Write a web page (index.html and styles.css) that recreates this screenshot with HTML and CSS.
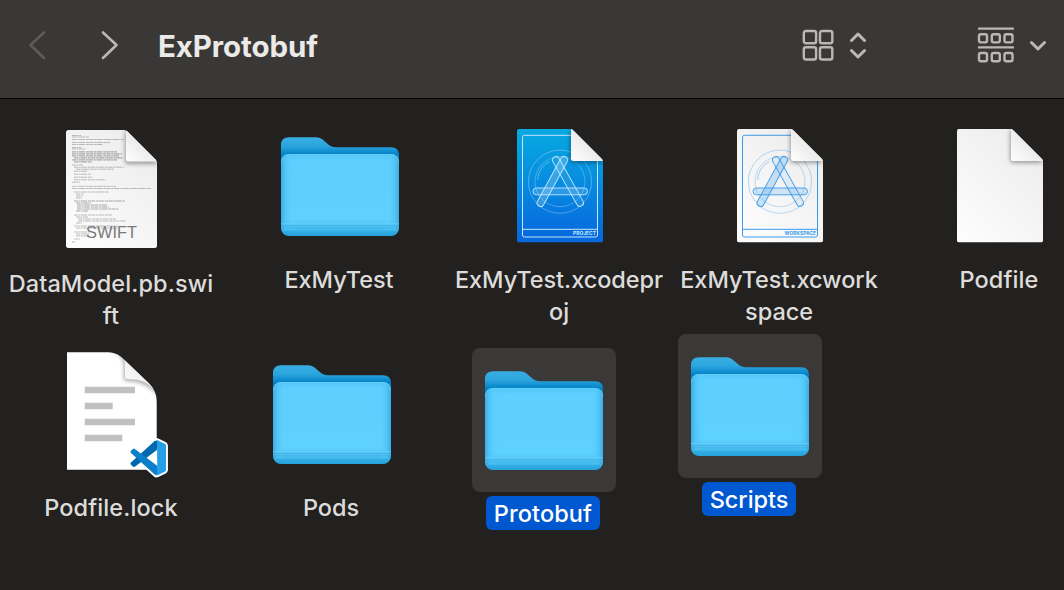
FILE: index.html
```html
<!doctype html>
<html lang="en">
  <head>
    <meta charset="UTF-8" />
    <meta name="viewport" content="width=device-width, initial-scale=1.0" />
    <title>ExProtobuf</title>
    <link rel="stylesheet" href="styles.css">
  </head>
  <body>
    <!-- Shared icon artwork -->
    <svg class="sprite" width="0" height="0" aria-hidden="true">
      <defs>
        <linearGradient id="folderBack" x1="0" y1="23" x2="0" y2="41" gradientUnits="userSpaceOnUse">
          <stop offset="0" stop-color="#3aaee3" />
          <stop offset="0.5" stop-color="#2ba5de" />
          <stop offset="1" stop-color="#0080c5" />
        </linearGradient>
        <linearGradient id="folderEdge" x1="0" y1="0" x2="1" y2="0">
          <stop offset="0" stop-color="#2ba3dc" stop-opacity="0.8" />
          <stop offset="0.035" stop-color="#48bdf2" stop-opacity="0.6" />
          <stop offset="0.11" stop-color="#5fd0ff" stop-opacity="0" />
          <stop offset="0.89" stop-color="#5fd0ff" stop-opacity="0" />
          <stop offset="0.965" stop-color="#48bdf2" stop-opacity="0.6" />
          <stop offset="1" stop-color="#2ba3dc" stop-opacity="0.8" />
        </linearGradient>
        <linearGradient id="folderFront" x1="0" y1="40" x2="0" y2="122" gradientUnits="userSpaceOnUse">
          <stop offset="0" stop-color="#52c6f8" />
          <stop offset="0.08" stop-color="#5ecfff" />
          <stop offset="0.8" stop-color="#5fd1ff" />
          <stop offset="0.87" stop-color="#51c4f6" />
          <stop offset="0.93" stop-color="#43b9ed" />
          <stop offset="0.95" stop-color="#2eaae2" />
          <stop offset="1" stop-color="#28a2da" />
        </linearGradient>
        <linearGradient id="paper" x1="0.1" y1="1" x2="0.8" y2="0">
          <stop offset="0" stop-color="#fdfdfd" />
          <stop offset="1" stop-color="#ececec" />
        </linearGradient>
        <linearGradient id="blueprint" x1="0" y1="0" x2="0" y2="1">
          <stop offset="0" stop-color="#08a9e0" />
          <stop offset="0.5" stop-color="#078ae0" />
          <stop offset="1" stop-color="#0566dd" />
        </linearGradient>
        <linearGradient id="flap" x1="0" y1="1" x2="0.6" y2="0.4">
          <stop offset="0" stop-color="#ffffff" />
          <stop offset="1" stop-color="#e6e6e6" />
        </linearGradient>
        <linearGradient id="lockFlap" x1="0" y1="1" x2="0.6" y2="0.4">
          <stop offset="0" stop-color="#ffffff" />
          <stop offset="1" stop-color="#eeeeee" />
        </linearGradient>
        <filter id="soft" x="-30%" y="-30%" width="160%" height="160%">
          <feGaussianBlur stdDeviation="2.2" />
        </filter>
        <clipPath id="pageClip">
          <path d="M31 15h51.500q1.500 0 2.500 1l29 29q1 1 1 2.500v79q0 2-2 2H31q-2 0-2-2V17q0-2 2-2z" />
        </clipPath>
        <clipPath id="swiftClip">
          <path d="M28.500 12H84q2 0 3.500 1.500l28 28q1.500 1.500 1.500 3.500v82.500q0 2.500-2.500 2.500h-86q-2.500 0-2.500-2.500v-113q0-2.500 2.500-2.500z" />
        </clipPath>
        <clipPath id="lockClip">
          <path d="M27 10.300H68C76 10.300 80.500 14 84.500 18L107 39.500C113.500 45.500 116.700 51 116.700 60V127.700H27z" />
        </clipPath>
        <clipPath id="frontClip">
          <rect x="13" y="40" width="118" height="82" rx="8" />
        </clipPath>
      </defs>

      <symbol id="folder" viewBox="0 0 144 144">
        <path d="M13 31q0-7.700 8-7.700h26.500c4 0 6 1.200 8.500 3.400l3.500 3.100c2.500 2.200 4.500 3.400 8.500 3.400H123q8 0 8 8V70H13z" fill="url(#folderBack)" />
        <rect x="13" y="40" width="118" height="82" rx="8" fill="url(#folderFront)" />
        <g clip-path="url(#frontClip)">
          <rect x="13" y="40" width="118" height="76" fill="url(#folderEdge)" />
          <path d="M13 109.800h118" stroke="#67cdf7" stroke-width="1" />
          <path d="M13 111.500h118M13 113.700h118" stroke="#3eb1e4" stroke-width="1" opacity="0.700" />
        </g>
        <path d="M13.500 49q0-8.500 8-8.500h101q8 0 8 8.500" fill="none" stroke="#6cd0fa" stroke-width="0.600" />
      </symbol>

      <symbol id="page" viewBox="0 0 144 144">
        <rect x="29" y="15" width="86" height="113.500" fill="url(#paper)" clip-path="url(#pageClip)" />
      </symbol>

      <symbol id="corner" viewBox="0 0 144 144">
        <g clip-path="url(#pageClip)">
          <path d="M82 15v30q0 4 4 4h30z" fill="#000" opacity="0.350" filter="url(#soft)" />
          <path d="M83 13v31.500q0 2.500 2.500 2.500H117z" fill="url(#flap)" />
        </g>
      </symbol>

      <!-- Xcode "A" drawing, coloured with currentColor -->
      <symbol id="xcode" viewBox="0 0 144 144">
        <g fill="none" stroke="currentColor">
          <path d="M36.500 21.300H83M109.500 47v74q0 2-2 2h-71q-2 0-2-2V23.300q0-2 2-2M34.500 115.300h75" />
          <circle cx="72" cy="67.700" r="31.600" stroke-width="0.800" opacity="0.450" />
          <circle cx="72" cy="67.700" r="25" stroke-width="0.800" opacity="0.400" />
          <path d="M49.500 66a23 23 0 0 1 12-18.500" stroke-width="0.800" opacity="0.550" />
        </g>
        <g stroke="currentColor" stroke-width="0.900" fill="currentColor" fill-opacity="0.100">
          <rect x="76.500" y="39.500" width="7" height="56" rx="3.500" transform="rotate(-29.300 80 67.500)" />
          <rect x="45" y="74" width="54.500" height="6.800" rx="3.400" fill-opacity="0.200" />
          <rect x="60.800" y="39.500" width="7" height="56" rx="3.500" fill-opacity="0.250" transform="rotate(28.600 64.300 67.500)" />
        </g>
      </symbol>
    </svg>

    <header class="toolbar">
      <svg class="nav nav-back" width="18" height="30" viewBox="0 0 18 30"><path d="M16 2.500 2.500 15 16 28" /></svg>
      <svg class="nav nav-forward" width="18" height="30" viewBox="0 0 18 30"><path d="M2 2.500 15.500 15 2 28" /></svg>
      <h1 class="title">ExProtobuf</h1>

      <div class="view-switch">
        <svg class="tool" width="32" height="32" viewBox="0 0 32 32">
          <rect x="1.800" y="2" width="12.300" height="12.300" rx="2" />
          <rect x="18" y="2" width="12.300" height="12.300" rx="2" />
          <rect x="1.800" y="18.200" width="12.300" height="12.300" rx="2" />
          <rect x="18" y="18.200" width="12.300" height="12.300" rx="2" />
        </svg>
        <svg class="tool arrows" width="18" height="28" viewBox="0 0 18 28"><path d="M2.500 9.500 9 3 15.500 9.500M2.500 19.500 9 26 15.500 19.500" /></svg>
      </div>

      <div class="group-by">
        <svg class="tool" width="38" height="36" viewBox="0 0 38 36">
          <path d="M2 1.600h34M2 20.400h34" />
          <rect x="2" y="7.200" width="8" height="8.200" rx="1.800" />
          <rect x="14.800" y="7.200" width="8" height="8.200" rx="1.800" />
          <rect x="27.500" y="7.200" width="8" height="8.200" rx="1.800" />
          <rect x="2" y="26" width="8" height="8.200" rx="1.800" />
          <rect x="14.800" y="26" width="8" height="8.200" rx="1.800" />
          <rect x="27.500" y="26" width="8" height="8.200" rx="1.800" />
        </svg>
        <svg class="tool arrows" width="18" height="12" viewBox="0 0 18 12"><path d="M2.500 3.500 9 10 15.500 3.500" /></svg>
      </div>
    </header>

    <main class="canvas">
      <div class="item item-datamodel">
        <svg class="icon" viewBox="0 0 144 144">
          <rect x="26" y="12" width="91" height="118" fill="url(#paper)" clip-path="url(#swiftClip)" />
          <g class="code">
            <path d="M32 17.500h9M32 19h17M32 21.500h52M32 24.500h38M32 26.500h31M32 29.500h9M32 31h13" />
            <path class="dense" d="M32 33.800h45M32 35.800h50M32 37.800h47M34 39.800h49M32 41.800h45M34 43.800h18" />
            <path d="M32 47h11M34 49.200h50M36 51.200h38M34 53.200h13M34 56.200h17M34 59.200h18M34 61.800h32M32 64.200h8" />
            <path d="M32 68.300h44M32 70.500h79M34 74h35M36 76h8M36 78h7M36 80h6" />
            <path class="dense" d="M34 83h51M36 85h15M37 87h30M37 89h32M37 91h42M36 93h12" />
            <path d="M34 97h38M36 99h12M38 101h38M38 103h48M36 105h6M34 108h44M36 110h42M34 114h16M36 116h14M36 118h13M34 121h6M32 124h3" />
          </g>
          <g clip-path="url(#swiftClip)">
            <path d="M85 12v31q0 3 3 3h31z" fill="#000" opacity="0.350" filter="url(#soft)" />
            <path d="M86 10v31q0 2.500 2.500 2.500H120z" fill="url(#flap)" />
          </g>
          <text class="kind" x="46" y="119.700" textLength="51" lengthAdjust="spacingAndGlyphs">SWIFT</text>
        </svg>
        <span class="name loose">DataModel.pb.swi<br>ft</span>
      </div>

      <div class="item item-exmytest">
        <svg class="icon"><use href="#folder" /></svg>
        <span class="name">ExMyTest</span>
      </div>

      <div class="item item-project">
        <svg class="icon" viewBox="0 0 144 144">
          <rect x="29" y="15" width="86" height="113.500" fill="url(#blueprint)" clip-path="url(#pageClip)" />
          <use class="ink-white" href="#xcode" width="144" height="144" />
          <use href="#corner" width="144" height="144" />
          <text class="stamp ink-white" x="85" y="121" textLength="23" lengthAdjust="spacingAndGlyphs">PROJECT</text>
        </svg>
        <span class="name">ExMyTest.xcodepr<br>oj</span>
      </div>

      <div class="item item-workspace">
        <svg class="icon" viewBox="0 0 144 144">
          <use href="#page" width="144" height="144" />
          <use class="ink-blue" href="#xcode" width="144" height="144" />
          <use href="#corner" width="144" height="144" />
          <text class="stamp ink-blue" x="76.500" y="121" textLength="31.500" lengthAdjust="spacingAndGlyphs">WORKSPACE</text>
        </svg>
        <span class="name">ExMyTest.xcwork<br>space</span>
      </div>

      <div class="item item-podfile">
        <svg class="icon" viewBox="0 0 144 144">
          <use href="#page" width="144" height="144" />
          <use href="#corner" width="144" height="144" />
        </svg>
        <span class="name loose">Podfile</span>
      </div>

      <div class="item item-lock">
        <svg class="icon" viewBox="0 0 144 144">
          <g clip-path="url(#lockClip)">
            <rect x="27" y="10" width="90" height="118" fill="#fff" />
            <path d="M70 8c9 2 14 8 14 16v12q0 3 4 3c12 0 22 5 30 14V8z" fill="#000" opacity="0.350" filter="url(#soft)" />
            <path d="M76 8c7 4 9 9 9 16v10q0 3.300 3.300 3.300C98 37 108 40 113 47V8z" fill="url(#lockFlap)" />
          </g>
          <path d="M44.700 44.700H95v6.600H44.700zM44.700 60.700h28v6.600h-28zM44.700 76.700H95v6.600H44.700zM44.700 92.700h37.600v6.600H44.700z" fill="#bfc1c0" />
          <g transform="translate(90.500 98) scale(1.480)">
            <path d="M23.150 2.587L18.210.210a1.494 1.494 0 0 0-1.705.290l-9.460 8.630-4.120-3.128a1 1 0 0 0-1.276.057L.327 7.261A1 1 0 0 0 .326 8.740L3.899 12 .326 15.260a1 1 0 0 0 0 1.479L1.650 17.940a1 1 0 0 0 1.276.057l4.120-3.128 9.460 8.630a1.492 1.492 0 0 0 1.704.290l4.942-2.377A1.500 1.500 0 0 0 24 20.060V3.939a1.500 1.500 0 0 0-.850-1.352z" fill="#fff" stroke="#fff" stroke-width="2.600" stroke-linejoin="round" />
            <path d="M18 6.552 2.926 17.998a1 1 0 0 1-1.276-.058L.327 16.739a1 1 0 0 1 0-1.479L16.505.500 19 .500z" fill="#0069b0" />
            <path d="M18 17.448 2.926 6.002a1 1 0 0 0-1.276.058L.327 7.261a1 1 0 0 0 0 1.479L16.505 23.500 19 23.500z" fill="#0b7fc9" />
            <path d="M18 6.200V1.500Q18 .700 17.200.200q.500-.200 1.010.010l4.940 2.377A1.500 1.500 0 0 1 24 3.939V20.060a1.500 1.500 0 0 1-.850 1.353l-4.940 2.377q-.600.250-1.100 0 .890-.500.890-1.400z" fill="#25a0e8" />
          </g>
        </svg>
        <span class="name loose">Podfile.lock</span>
      </div>

      <div class="item item-pods">
        <svg class="icon"><use href="#folder" /></svg>
        <span class="name">Pods</span>
      </div>

      <div class="item item-protobuf selected">
        <svg class="icon"><use href="#folder" /></svg>
        <span class="name loose">Protobuf</span>
      </div>

      <div class="item item-scripts selected">
        <svg class="icon"><use href="#folder" /></svg>
        <span class="name">Scripts</span>
      </div>
    </main>
  </body>
</html>
```

FILE: styles.css
```css
* { box-sizing: border-box; }
body {
  margin: 0;
  height: 590px;
  display: flex;
  flex-direction: column;
  overflow: hidden;
  font-family: Inter, "Liberation Sans", sans-serif;
  background-color: #22211f;
}
.sprite { position: absolute; }

/* --- Toolbar --- */
.toolbar {
  display: flex;
  align-items: center;
  flex: none;
  height: 99px;
  padding: 0 17px 9px 28px;
  background-color: #393836;
  border-bottom: 1px solid #000;
}
.toolbar svg {
  display: block;
  fill: none;
  stroke: #b9b8b6;
  stroke-linecap: round;
  stroke-linejoin: round;
}
.nav { stroke-width: 2.6; }
.toolbar .nav-back { stroke: #5d5c5a; }
.nav-forward { margin-left: 55px; }
.title {
  margin: 0 0 0 39px;
  padding-top: 2px;
  color: #ebeae8;
  font-size: 29.5px;
  font-weight: 700;
  letter-spacing: -0.1px;
  line-height: 36px;
}
.tool { stroke-width: 2.4; }
.toolbar .arrows { stroke-width: 3; }
.view-switch {
  display: flex;
  align-items: center;
  gap: 15px;
  margin-left: auto;
}
.group-by {
  display: flex;
  align-items: center;
  gap: 14px;
  margin-left: 110px;
}

/* --- Icon canvas --- */
.canvas {
  position: relative;
  flex: 1;
}
.item {
  position: absolute; /* free placement, positions below */
  display: flex;
  flex-direction: column;
  align-items: center;
  width: 144px;
}
.icon {
  display: block;
  width: 144px;
  height: 144px;
  border-radius: 8px;
}
.name {
  margin: 4px 2px 0 0;
  padding: 2px 8px 0;
  border-radius: 6px;
  color: #dddcdb;
  font-size: 23.5px;
  font-weight: 450;
  letter-spacing: -0.05px;
  line-height: 32px;
  text-align: center;
  white-space: nowrap;
}
.loose { letter-spacing: 0.1px; }
.selected .icon { background-color: #3a3937; }
.selected .name {
  color: #fff;
  background-color: #0058d0;
}

.item-datamodel { left: 40px; top: 19px; }
.item-exmytest { left: 268px; top: 15px; }
.item-project { left: 488px; top: 15px; }
.item-workspace { left: 708px; top: 15px; }
.item-podfile { left: 928px; top: 15px; }
.item-lock { left: 40px; top: 243px; }
.item-pods { left: 260px; top: 243px; }
.item-protobuf { left: 472px; top: 249px; }
.item-scripts { left: 678px; top: 235px; }

/* --- Document artwork --- */
.code {
  fill: none;
  stroke: #777;
  stroke-width: 0.8;
  stroke-dasharray: 4 0.6 2 0.5 6 0.8 3 0.4;
  opacity: 0.6;
}
.dense { stroke-width: 1.2; }
.kind {
  fill: #7a7a7a;
  font-family: "Liberation Sans", sans-serif;
  font-size: 17px;
}
.stamp {
  fill: currentColor;
  font-size: 5px;
  font-weight: 700;
}
.ink-white { color: #c5e8fb; }
.ink-blue { color: #3b9bec; }
```
